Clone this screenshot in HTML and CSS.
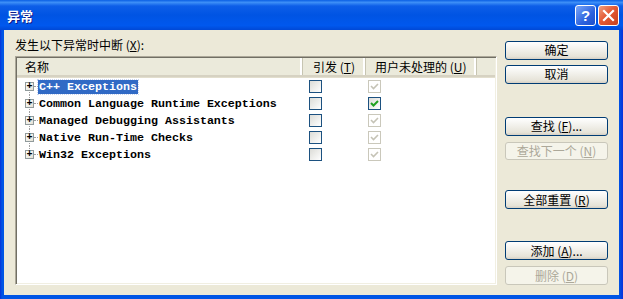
FILE: index.html
```html
<!DOCTYPE html>
<html lang="zh-CN">
<head>
    <meta charset="UTF-8">
    <title>异常</title>
    <link rel="stylesheet" href="styles.css">
</head>
<body>
    <div class="window">
        <div class="titlebar">
            <span class="title">异常</span>
            <span class="caption-btn help">?</span>
            <span class="caption-btn close">
                <svg width="13" height="13" viewBox="0 0 13 13"><path d="M2 2 L11 11 M11 2 L2 11" stroke="#fff" stroke-width="2.2" stroke-linecap="square"/></svg>
            </span>
        </div>
        <div class="client">
            <div class="left">
                <div class="caption">发生以下异常时中断 (<u>X</u>):</div>
                <div class="listbox">
                    <div class="list-header">
                        <div class="col col-name">名称</div>
                        <div class="col col-thrown">引发 (<u>T</u>)</div>
                        <div class="col col-user">用户未处理的 (<u>U</u>)</div>
                        <div class="col col-fill"></div>
                    </div>
                    <div class="rows">
                        <div class="row first">
                            <div class="cell-name"><span class="expander">+</span><span class="name selected">C++ Exceptions</span></div>
                            <div class="cell-thrown"><span class="check"></span></div>
                            <div class="cell-user"><span class="check disabled"><svg width="11" height="11" viewBox="0 0 11 11"><path d="M2 5 L4.5 7.5 L9 3" fill="none" stroke="#c5c3b6" stroke-width="1.6"/></svg></span></div>
                        </div>
                        <div class="row">
                            <div class="cell-name"><span class="expander">+</span><span class="name">Common Language Runtime Exceptions</span></div>
                            <div class="cell-thrown"><span class="check"></span></div>
                            <div class="cell-user"><span class="check"><svg width="11" height="11" viewBox="0 0 11 11"><path d="M2 5 L4.5 7.5 L9 3" fill="none" stroke="#21a121" stroke-width="2"/></svg></span></div>
                        </div>
                        <div class="row">
                            <div class="cell-name"><span class="expander">+</span><span class="name">Managed Debugging Assistants</span></div>
                            <div class="cell-thrown"><span class="check"></span></div>
                            <div class="cell-user"><span class="check disabled"><svg width="11" height="11" viewBox="0 0 11 11"><path d="M2 5 L4.5 7.5 L9 3" fill="none" stroke="#c5c3b6" stroke-width="1.6"/></svg></span></div>
                        </div>
                        <div class="row">
                            <div class="cell-name"><span class="expander">+</span><span class="name">Native Run-Time Checks</span></div>
                            <div class="cell-thrown"><span class="check"></span></div>
                            <div class="cell-user"><span class="check disabled"><svg width="11" height="11" viewBox="0 0 11 11"><path d="M2 5 L4.5 7.5 L9 3" fill="none" stroke="#c5c3b6" stroke-width="1.6"/></svg></span></div>
                        </div>
                        <div class="row last">
                            <div class="cell-name"><span class="expander">+</span><span class="name">Win32 Exceptions</span></div>
                            <div class="cell-thrown"><span class="check"></span></div>
                            <div class="cell-user"><span class="check disabled"><svg width="11" height="11" viewBox="0 0 11 11"><path d="M2 5 L4.5 7.5 L9 3" fill="none" stroke="#c5c3b6" stroke-width="1.6"/></svg></span></div>
                        </div>
                    </div>
                </div>
            </div>
            <div class="buttons">
                <button class="btn">确定</button>
                <button class="btn near">取消</button>
                <button class="btn far-1">查找 (<u>F</u>)...</button>
                <button class="btn near-6" disabled>查找下一个 (<u>N</u>)</button>
                <button class="btn far-2">全部重置 (<u>R</u>)</button>
                <button class="btn far-3">添加 (<u>A</u>)...</button>
                <button class="btn near-6" disabled>删除 (<u>D</u>)</button>
            </div>
        </div>
    </div>
</body>
</html>
```
FILE: styles.css
```css
body {
    margin: 0;
    font-family: "Noto Sans CJK SC", "Liberation Sans", sans-serif;
    font-size: 12px;
    overflow: hidden;
}
.window {
    width: 623px;
    height: 299px;
    display: flex;
    flex-direction: column;
    background: linear-gradient(to right, #0831d9 0, #0055e5 2px, #0055e5 619px, #0831d9 623px);
}
.titlebar {
    height: 30px;
    flex: none;
    display: flex;
    align-items: center;
    padding: 0 4px 0 7px;
    background: linear-gradient(#0a5fe4 0%, #3d8ff7 8%, #0d5ee8 20%, #0054e3 50%, #0058ee 85%, #0048d6 100%);
}
.title {
    flex: 1;
    color: white;
    font-weight: bold;
    font-size: 13px;
    text-shadow: 1px 1px #0a1b8a;
}
.caption-btn {
    width: 19px;
    height: 19px;
    border: 1px solid #fff;
    border-radius: 3px;
    margin-left: 2px;
    display: flex;
    align-items: center;
    justify-content: center;
    color: white;
    font-family: "Liberation Sans", sans-serif;
    font-weight: bold;
    font-size: 15px;
}
.help {
    background: linear-gradient(135deg, #7aa6f8, #2d63de 60%, #1d4fcc);
}
.close {
    background: linear-gradient(135deg, #f0a080, #e45a35 45%, #c8411e);
}
.client {
    flex: 1;
    margin: 0 4px 4px 4px;
    background: #ece9d8;
    display: flex;
    gap: 8px;
    padding: 7px 11px 10px 11px;
    min-height: 0;
}
.left {
    width: 482px;
    display: flex;
    flex-direction: column;
}
.caption {
    line-height: 16px;
    margin-bottom: 3px;
}
.listbox {
    flex: 1;
    background: white;
    border: 1px solid;
    border-color: #aca899 #fff #fff #aca899;
    box-shadow: inset 1px 1px #716f64, inset -1px -1px #f1efe2;
    padding: 1px;
}
.list-header {
    display: flex;
    height: 17px;
    background: #ebeadb;
    border-bottom: 2px solid #d6d2c2;
    box-shadow: 0 1px #e2decd;
}
.col {
    line-height: 17px;
    padding-left: 8px;
    box-sizing: border-box;
    border-right: 1px solid #c7c5b2;
    box-shadow: inset -2px 0 #fff;
}
.col-name { width: 286px; }
.col-thrown { width: 63px; padding-left: 10px; }
.col-user { width: 111px; padding-left: 9px; }
.col-fill { flex: 1; border-right: none; box-shadow: none; }
.rows {
    padding-top: 1px;
}
.row {
    display: flex;
    height: 17px;
    align-items: center;
}
.cell-name {
    width: 286px;
    height: 17px;
    display: flex;
    align-items: center;
    padding-left: 8px;
    box-sizing: border-box;
    position: relative;
}
.cell-name::before {
    content: "";
    position: absolute;
    left: 12px;
    top: 0;
    bottom: 0;
    border-left: 1px dotted #a0a0a0;
}
.first .cell-name::before { top: 50%; }
.last .cell-name::before { bottom: 50%; }
.cell-name::after {
    content: "";
    position: absolute;
    left: 17px;
    width: 4px;
    top: 8px;
    border-top: 1px dotted #a0a0a0;
}
.expander {
    width: 7px;
    height: 7px;
    border: 1px solid #919b9c;
    background: linear-gradient(135deg, #fff, #e4e1d5);
    font-family: "Liberation Mono", monospace;
    font-size: 10px;
    line-height: 7px;
    text-align: center;
    font-weight: bold;
    color: #000;
    position: relative;
    z-index: 1;
}
.name {
    margin-left: 4px;
    padding: 0 1px;
    font-family: "Liberation Mono", "DejaVu Sans Mono", monospace;
    font-weight: bold;
    font-size: 11.67px;
    line-height: 14px;
    color: #000;
    white-space: nowrap;
}
.name.selected {
    background: #316ac5;
    color: white;
    outline: 1px dotted #c8d4ef;
}
.cell-thrown {
    width: 63px;
    padding-left: 6px;
    box-sizing: border-box;
    display: flex;
}
.cell-user {
    width: 111px;
    padding-left: 2px;
    box-sizing: border-box;
    display: flex;
}
.check {
    width: 11px;
    height: 11px;
    border: 1px solid #1c5180;
    background: linear-gradient(135deg, #dcdcd7, #fff);
    display: flex;
}
.check.disabled {
    border-color: #cac8bb;
    background: #fff;
}
.buttons {
    width: 103px;
    display: flex;
    flex-direction: column;
    padding-top: 4px;
}
.btn {
    height: 19px;
    padding: 0;
    border: 1px solid #003c74;
    border-radius: 3px;
    background: linear-gradient(#fff, #f3f2ed 40%, #e6e3d8 85%, #d6d0c5);
    font-family: "Noto Sans CJK SC", sans-serif;
    font-size: 12px;
    line-height: 16px;
    color: #000;
}
.btn:disabled {
    border-color: #c9c7ba;
    background: #f5f4ea;
    color: #aca899;
}
.near { margin-top: 5px; }
.near-6 { margin-top: 6px; }
.far-1 { margin-top: 33px; }
.far-2 { margin-top: 30px; }
.far-3 { margin-top: 32px; }
```
